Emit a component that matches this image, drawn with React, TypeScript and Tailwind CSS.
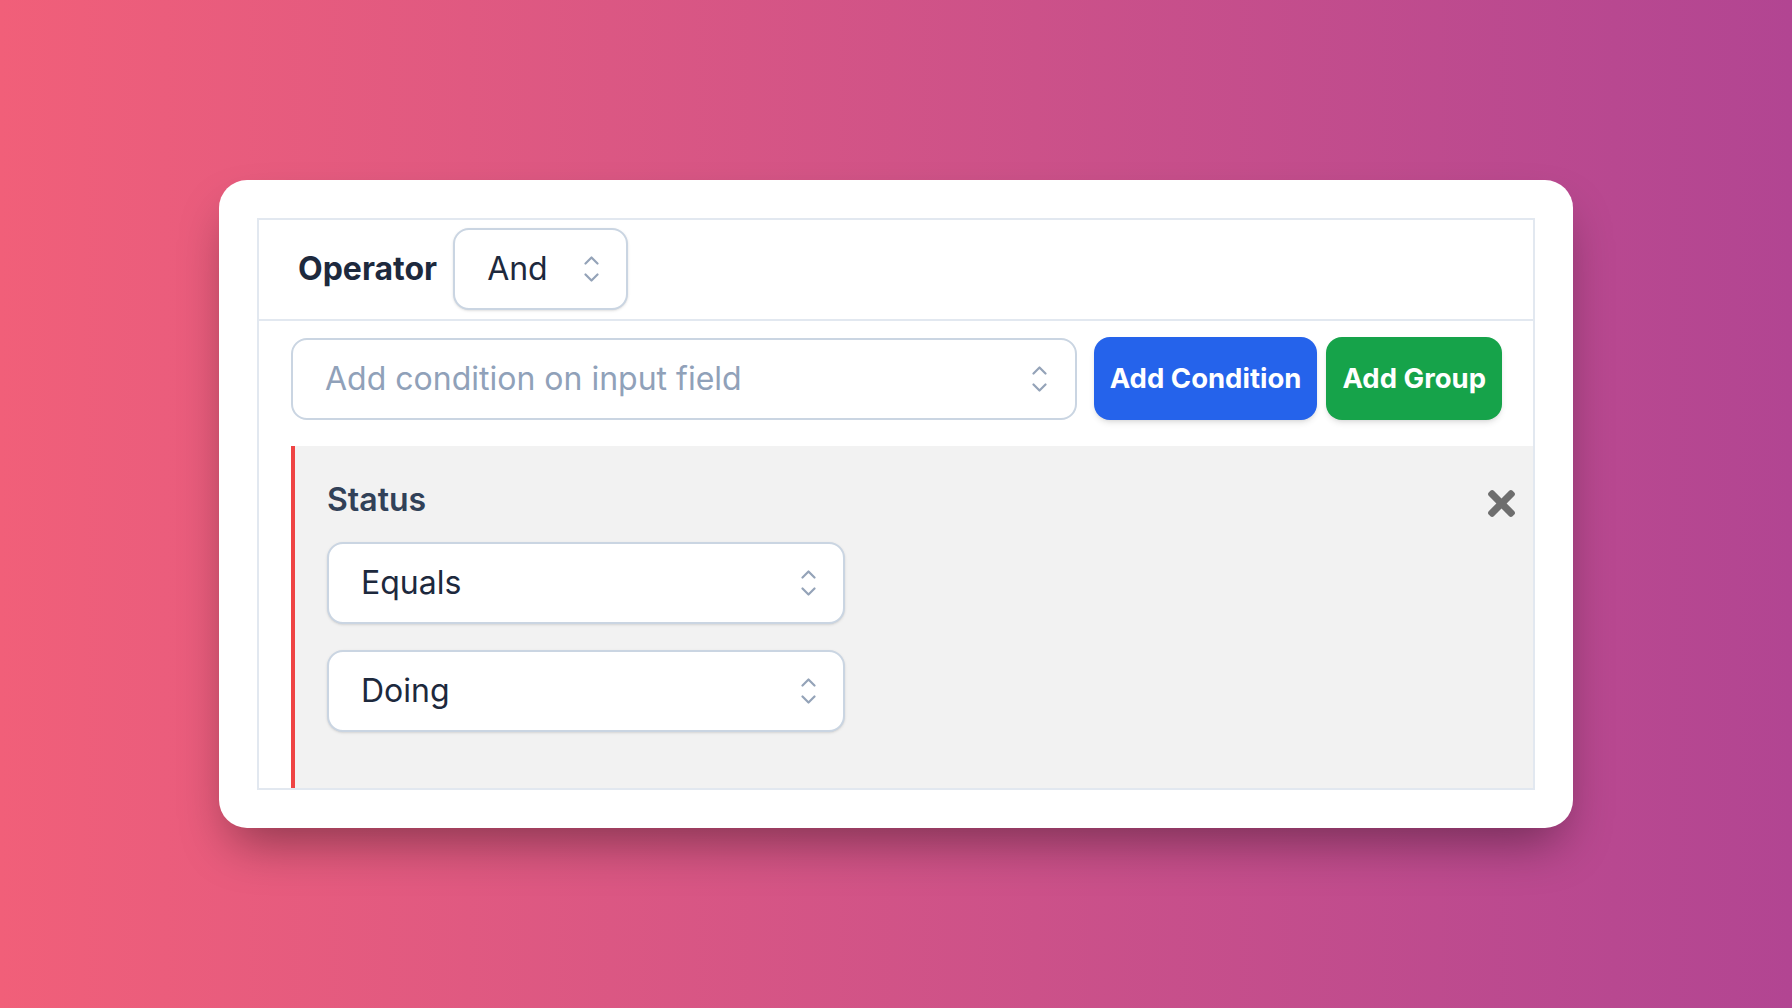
import React from 'react';

const Chevrons = () => (
  <svg width="15" height="28" viewBox="0 0 15 28" fill="none" stroke="#94a3b8" strokeWidth="2.2" strokeLinecap="round" strokeLinejoin="round">
    <path d="M1.5 8.5 L7.5 2.5 L13.5 8.5" />
    <path d="M1.5 19.5 L7.5 25.5 L13.5 19.5" />
  </svg>
);

const CloseIcon = () => (
  <svg width="27" height="27" viewBox="0 80 352 352" fill="#6e6e6e">
    <path d="M242.72 256l100.07-100.07c12.28-12.28 12.28-32.19 0-44.48l-22.24-22.24c-12.28-12.28-32.19-12.28-44.48 0L176 189.28 75.93 89.21c-12.28-12.28-32.19-12.28-44.48 0L9.21 111.45c-12.28 12.280-12.28 32.19 0 44.48L109.28 256 9.21 356.07c-12.28 12.28-12.28 32.19 0 44.48l22.24 22.24c12.28 12.28 32.2 12.28 44.48 0L176 322.72l100.07 100.07c12.28 12.28 32.2 12.28 44.48 0l22.24-22.24c12.28-12.28 12.28-32.19 0-44.48L242.72 256z" />
  </svg>
);

const Select = ({ value, className }: { value: string; className: string }) => (
  <div
    className={`h-[82px] flex items-center justify-between pl-8 pr-[27px] bg-white border-2 border-slate-300 rounded-2xl shadow-sm text-[32px] text-slate-800 ${className}`}
  >
    <span>{value}</span>
    <Chevrons />
  </div>
);

export default function App() {
  return (
    <div className="w-full h-screen flex items-center justify-center bg-gradient-to-r from-[#f15f79] to-[#b24592] font-[Inter,sans-serif]">
      <div className="w-[1354px] bg-white rounded-[28px] p-[38px] shadow-[0_25px_50px_-12px_rgba(0,0,0,0.4)]">
        <div className="border-2 border-slate-200">
          {/* operator row */}
          <div className="flex items-center gap-4 pl-[39px] pt-[8px] pb-[9px] border-b-2 border-slate-200">
            <span className="text-[32px] font-bold text-slate-800 leading-[48px]">Operator</span>
            <Select value="And" className="w-[175px]" />
          </div>

          <div className="pl-8 pt-4">
            {/* add condition row */}
            <div className="flex items-center pr-[31px]">
              <div className="flex-1 h-[82px] flex items-center justify-between pl-8 pr-[28px] border-2 border-slate-300 rounded-2xl text-[32px] text-slate-400 mr-[17px]">
                <span>Add condition on input field</span>
                <Chevrons />
              </div>
              <button className="h-[83px] px-4 rounded-2xl bg-[#2563eb] text-white text-[27.5px] font-bold shadow-md">
                Add Condition
              </button>
              <button className="h-[83px] px-4 ml-[9px] rounded-2xl bg-[#16a34a] text-white text-[27.5px] font-bold shadow-md">
                Add Group
              </button>
            </div>

            {/* group */}
            <div className="mt-[26px] bg-[#f2f2f2] border-l-4 border-[#ef4444] pl-8 pr-[18px] pt-[30px] pb-[56px]">
              <div className="flex items-center justify-between">
                <span className="text-[32px] font-semibold text-slate-700 leading-[48px]">Status</span>
                <span className="mt-[6px]">
                  <CloseIcon />
                </span>
              </div>
              <Select value="Equals" className="w-[518px] mt-[18px]" />
              <Select value="Doing" className="w-[518px] mt-[26px]" />
            </div>
          </div>
        </div>
      </div>
    </div>
  );
}
